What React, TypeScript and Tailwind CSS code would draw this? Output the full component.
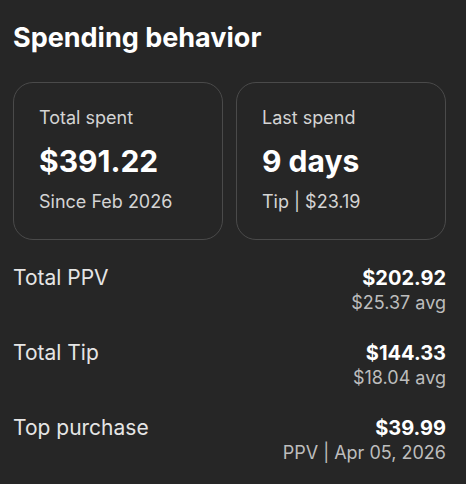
export default function App() {
  const rows = [
    { label: 'Total PPV', value: '$202.92', sub: '$25.37 avg' },
    { label: 'Total Tip', value: '$144.33', sub: '$18.04 avg' },
    { label: 'Top purchase', value: '$39.99', sub: 'PPV | Apr 05, 2026' },
  ]

  return (
    <div
      className="w-[466px] h-[484px] bg-[#262626] text-white pl-[13px] pr-[20px] pt-[20px]"
      style={{ fontFamily: 'Inter, "Noto Sans", sans-serif' }}
    >
      <h2 className="text-[27px] font-bold leading-[36px]">Spending behavior</h2>

      <div className="grid grid-cols-2 gap-[13px] mt-[26px]">
        <div className="h-[158px] rounded-[20px] border border-[#4a4a4a] px-[25px] pt-[23px]">
          <div className="text-[18px] text-[#d4d4d4] leading-[24px]">Total spent</div>
          <div className="text-[30px] font-bold leading-[36px] mt-[13px]">$391.22</div>
          <div className="text-[18px] text-[#d4d4d4] leading-[24px] mt-[11px]">Since Feb 2026</div>
        </div>
        <div className="h-[158px] rounded-[20px] border border-[#4a4a4a] px-[25px] pt-[23px]">
          <div className="text-[18px] text-[#d4d4d4] leading-[24px]">Last spend</div>
          <div className="text-[30px] font-bold leading-[36px] mt-[13px]">9 days</div>
          <div className="text-[18px] text-[#d4d4d4] leading-[24px] mt-[11px]">Tip | $23.19</div>
        </div>
      </div>

      <div className="flex flex-col gap-[25px] mt-[25px]">
        {rows.map((row) => (
          <div key={row.label} className="flex justify-between items-start">
            <div className="text-[21px] text-[#e5e5e5] leading-[26px]">{row.label}</div>
            <div className="flex flex-col items-end">
              <div className="text-[20px] font-bold leading-[26px]">{row.value}</div>
              <div className="text-[18px] text-[#bdbdbd] leading-[24px]">{row.sub}</div>
            </div>
          </div>
        ))}
      </div>
    </div>
  )
}
